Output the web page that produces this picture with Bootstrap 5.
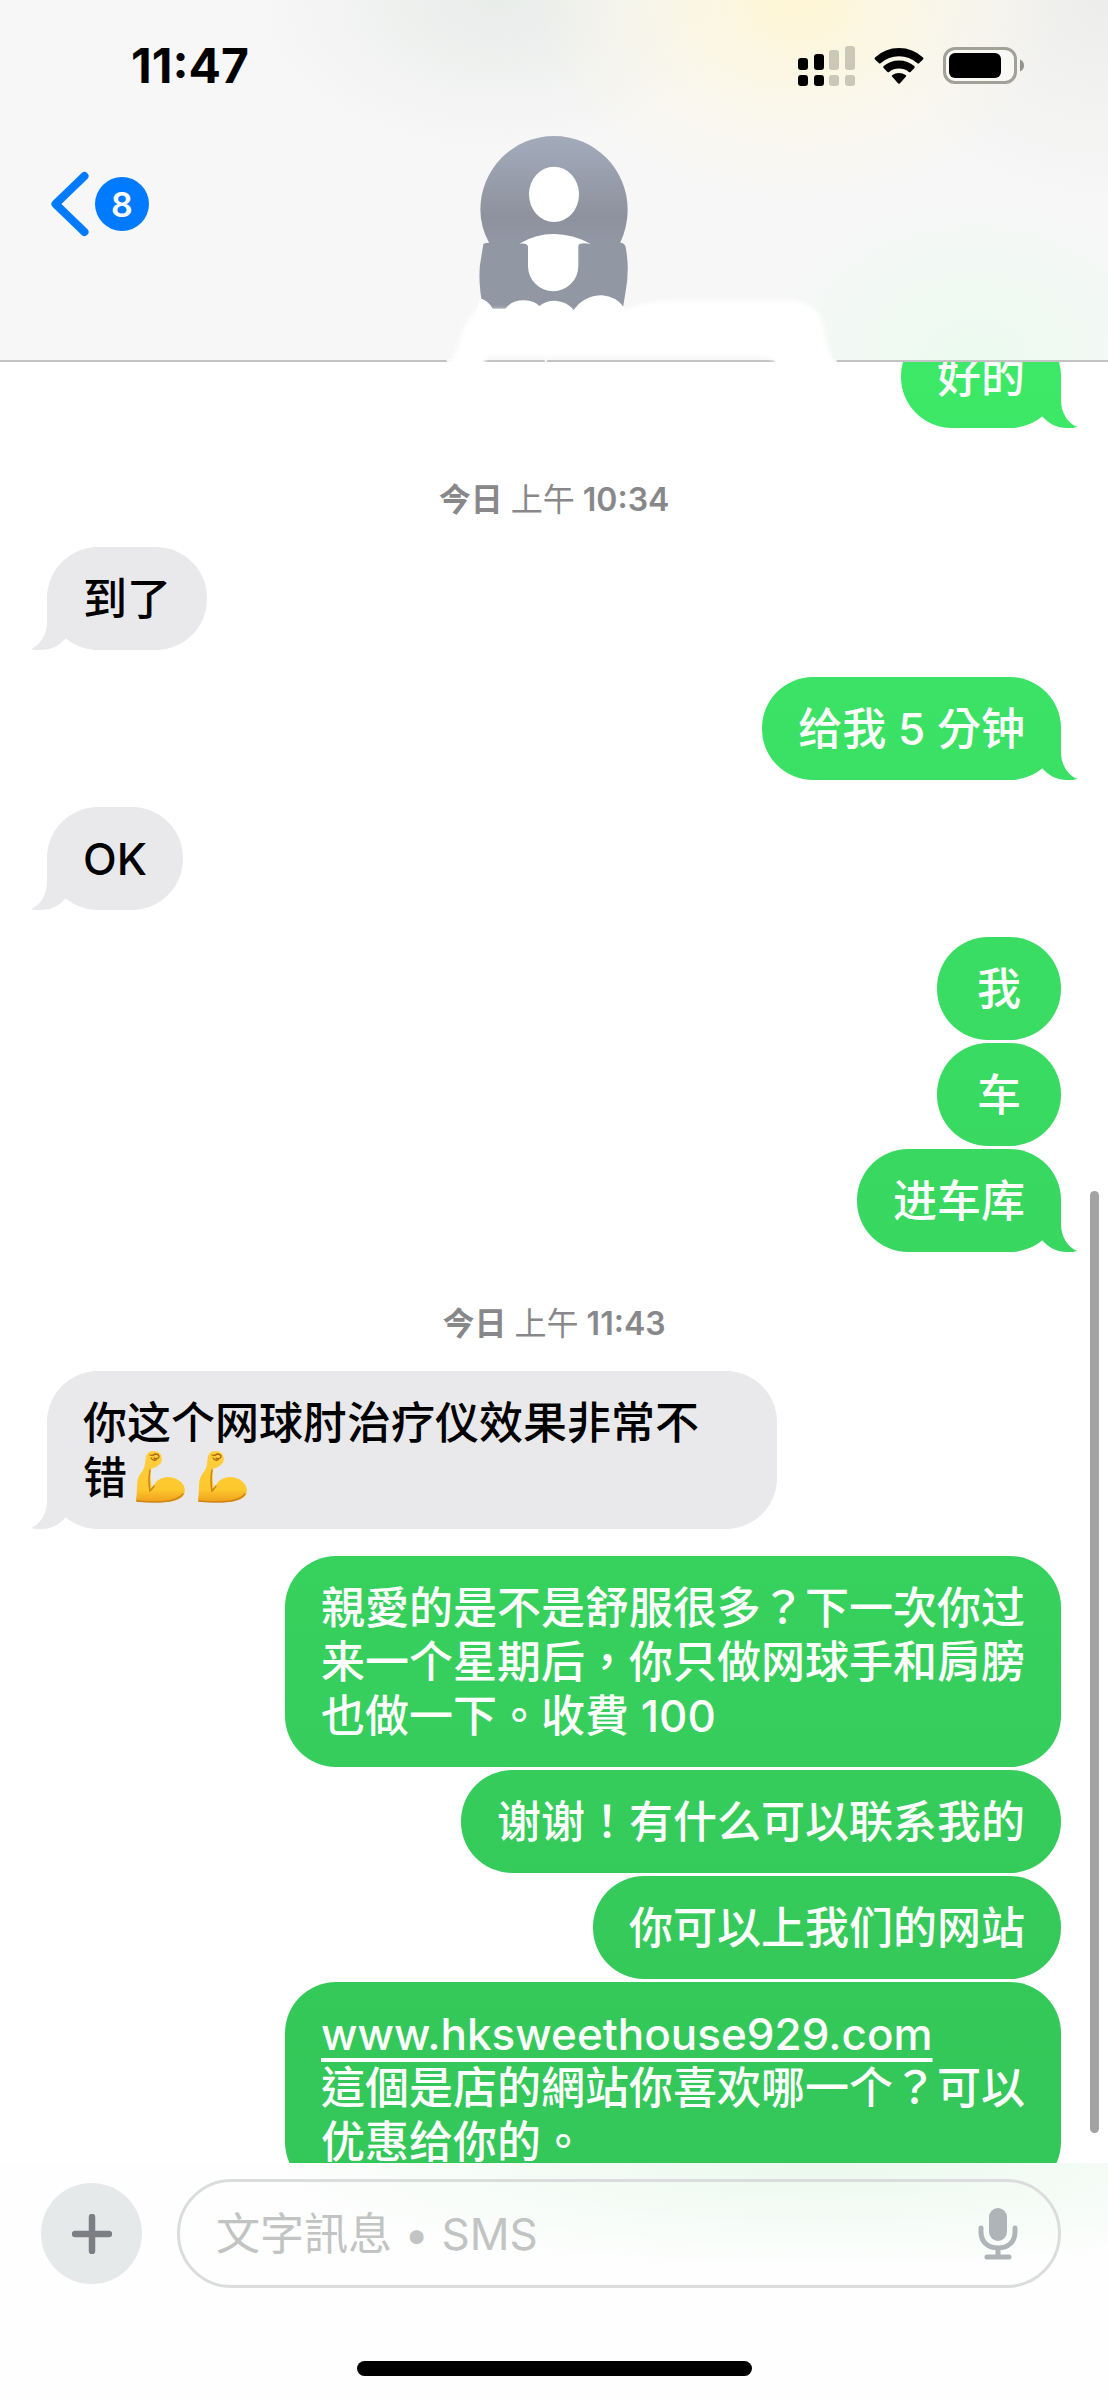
<!DOCTYPE html>
<html lang="zh-Hant">
<head>
<meta charset="utf-8">
<meta name="viewport" content="width=device-width, initial-scale=1">
<title>訊息</title>
<link href="https://cdn.jsdelivr.net/npm/bootstrap@5.3.0/dist/css/bootstrap.min.css" rel="stylesheet">
<style>
  body { font-family: Inter, "Noto Sans CJK TC", sans-serif; font-size: 44px; line-height: 54px; color: #000; background: #fff; }
  .topbar {
    z-index: 2; height: 362px; border-bottom: 2px solid #c3c3c4;
    background:
      radial-gradient(ellipse 260px 200px at 72% 0, rgba(255,246,212,1), rgba(253,248,226,.6) 50%, rgba(250,248,240,0)),
      radial-gradient(ellipse 240px 150px at 45% 0, rgba(231,235,232,.9), rgba(231,235,232,0)),
      radial-gradient(ellipse 240px 200px at 100% 0, rgba(236,236,234,.9), rgba(236,236,234,0)),
      radial-gradient(ellipse 220px 170px at 88% 100%, rgba(236,251,240,1), rgba(240,249,243,0)),
      #f7f7f7;
  }
  .status { padding: 39px 83px 0 131px; }
  .clock { font-size: 48px; font-weight: 700; }
  .status-icons { gap: 19px; }
  .back { padding: 0; margin: 78px 0 0 50px; gap: 6px; }
  .unread { width: 54px; height: 54px; font-size: 34px; font-weight: 600; background: #007aff; }
  .contact { top: 110px; left: 50%; margin-left: -134px; }
  .thread { padding: 0 47px; margin-top: -37px; }
  .bubble { position: relative; padding: 25px 36px 24px; border-radius: 51px; font-weight: 500; min-width: 124px; text-align: start; overflow-wrap: anywhere; }
  .sent { align-self: flex-end; max-width: 776px; color: #fff; }
  .sent, .sent.tail::after { background: linear-gradient(#3eec69 8%, #34c759 86%) fixed; }
  .received { align-self: flex-start; max-width: 72%; background: #e9e9eb; }
  .single { text-align: center; }
  .tail::after {
    content: ""; position: absolute; bottom: 0; right: -16px; width: 40px; height: 54px;
    clip-path: path("M0 0H24V26C24 39 31 49 40 53C38 54 34 54 30 54C20 54 12 50 5 42L0 34Z");
  }
  .received.tail::after { right: auto; left: -16px; background: #e9e9eb; transform: scaleX(-1); }
  .next { margin-top: 3px; }
  .turn { margin-top: 27px; }
  .stamp { height: 119px; padding-top: 25px; font-size: 32px; color: #88888b; font-weight: 600; }
  .stamp b { font-weight: 700; }
  .stamp i { font-style: normal; font-weight: 400; }
  .bubble a { color: #fff; font-weight: 500; text-decoration-thickness: 4px; text-underline-offset: 8px; }
  .emoji { width: 52px; height: 54px; margin: 0 2px 0 8px; vertical-align: -10px; }
  .scrollbar-thumb { right: 9px; top: 829px; bottom: 30px; width: 9px; border-radius: 5px; background: #a3a3a3; }
  .composer {
    z-index: 2; height: 237px;
    background: radial-gradient(ellipse 52% 110px at 74% 0, #ebf9ee, rgba(255,255,255,0)), #fefefe;
  }
  .compose-row { padding: 16px 47px 0 41px; gap: 35px; }
  .plus { width: 101px; height: 101px; padding: 0; background: #e6e9ea; flex: none; }
  .field { height: 109px; border: 3px solid #dbdddd; border-radius: 55px; padding: 0 40px 0 36px; }
  .field input { font-size: 44px; border: 0; background: transparent; padding: 0; box-shadow: none; outline: 0; min-width: 0; }
  .field input::placeholder { color: #c2c4c4; opacity: 1; }
  .home-bar { width: 395px; height: 15px; margin-bottom: 24px; border-radius: 8px; background: #000; }
</style>
<script src="https://cdn.jsdelivr.net/npm/bootstrap@5.3.0/dist/js/bootstrap.bundle.min.js"></script>
</head>
<body>
<div class="d-flex flex-column vh-100 overflow-hidden">

  <header class="topbar position-relative flex-shrink-0">
    <div class="status d-flex justify-content-between align-items-center">
      <span class="clock">11:47</span>
      <div class="status-icons d-flex align-items-center">
        <svg width="57" height="42" viewBox="0 0 57 42" aria-hidden="true">
          <g><rect x="0" y="13" width="10" height="12" rx="3"/><rect x="16" y="9" width="10" height="16" rx="3"/><rect x="0" y="30" width="10" height="11" rx="3"/><rect x="16" y="30" width="10" height="11" rx="3"/></g>
          <g fill="#c9c8b9"><rect x="31" y="5" width="10" height="20" rx="3"/><rect x="47" y="1" width="10" height="24" rx="3"/><rect x="31" y="30" width="10" height="11" rx="3"/><rect x="47" y="30" width="10" height="11" rx="3"/></g>
        </svg>
        <svg width="50" height="38" viewBox="0 0 50 38" aria-hidden="true">
          <path d="M1 12.500Q0 11.500 1 10.500Q11 1 25 1T49 10.500Q50 11.500 49 12.500L45 16.300Q44.300 17 43.400 16.200Q35.500 9.200 25 9.200T6.600 16.200Q5.700 17 5 16.300Z"/>
          <path d="M9.600 21Q8.700 20 9.700 19.100Q16 13.500 25 13.500T40.300 19.100Q41.300 20 40.400 21L36.500 24.900Q35.700 25.600 34.800 24.900Q30.500 21.600 25 21.600T15.200 24.900Q14.300 25.600 13.500 24.900Z"/>
          <path d="M18 29.600Q17.300 28.700 18.400 28Q21.300 26 25 26T31.600 28Q32.700 28.700 32 29.600L26 36.200Q25 37.200 24 36.200Z"/>
        </svg>
        <svg width="82" height="38" viewBox="0 0 82 38" aria-hidden="true">
          <rect x="1.500" y="1.500" width="71" height="34" rx="10.500" fill="#fff" fill-opacity=".4" stroke="#a1a197" stroke-width="3"/>
          <rect x="6" y="6" width="52" height="25" rx="6"/>
          <path d="M77 12.500C79.500 13.500 81 15.500 81 18.500S79.500 23.500 77 24.500Z" fill="#93938d"/>
        </svg>
      </div>
    </div>
    <button type="button" class="back btn border-0 d-flex align-items-center" aria-label="返回">
      <svg width="39" height="66" viewBox="0 0 39 66" aria-hidden="true"><path d="M34.500 5L5.500 33L34.500 61" fill="none" stroke="#007aff" stroke-width="8" stroke-linecap="round" stroke-linejoin="round"/></svg>
      <span class="unread rounded-circle text-white d-flex align-items-center justify-content-center">8</span>
    </button>
    <svg class="contact position-absolute" width="440" height="254" viewBox="0 0 1320 762" aria-hidden="true">
      <defs>
        <linearGradient id="disc" x1="0" y1="0" x2="0" y2="1"><stop offset="0" stop-color="#a3abbb"/><stop offset=".75" stop-color="#8e929e"/><stop offset="1" stop-color="#9297a5"/></linearGradient>
        <filter id="soft" x="-5%" y="-10%" width="110%" height="120%"><feGaussianBlur stdDeviation="7"/></filter>
      </defs>
      <path d="M208 400Q181 350 181 299A221 221 0 0 1 623 299Q623 350 600 400Z" fill="url(#disc)"/>
      <path d="M190 402Q196 398 208 398H600Q615 398 617 412Q630 480 616 550L608 600H190Q170 500 184 440Z" fill="#9297a4"/>
      <ellipse cx="402" cy="253" rx="75" ry="83" fill="#fff"/>
      <path d="M298 401Q345 372 402 372T512 402Q476 396 475 408V468A75 75 0 0 1 324 468V410Q322 398 298 401Z" fill="#fff"/>
      <path d="M85 775Q115 715 125 670Q150 610 178 598L600 606Q660 572 760 572H1120Q1190 580 1208 640Q1222 720 1248 775H1075Q1065 740 1030 740H200L185 775Z" fill="#fff" filter="url(#soft)"/>
      <path d="M180 565Q205 572 218 596H256Q275 571 312 571Q345 573 358 588Q378 572 405 572Q445 576 461 601Q490 557 546 556Q590 560 612 592V680H150Z" fill="#fff"/>
      <path d="M80 748H190V762H80ZM1064 748H1250V762H1064ZM374 748H381V762H374Z" fill="#fff" fill-opacity=".85"/>
    </svg>
  </header>

  <main class="position-relative flex-grow-1 overflow-hidden" style="min-height:0">
    <div class="thread d-flex flex-column">
      <div class="bubble sent tail">好的</div>
      <div class="stamp d-flex align-items-center justify-content-center"><span><b>今日</b> <i>上午</i> 10:34</span></div>
      <div class="bubble received tail">到了</div>
      <div class="bubble sent tail turn">给我 5 分钟</div>
      <div class="bubble received tail turn">OK</div>
      <div class="bubble sent single turn">我</div>
      <div class="bubble sent single next">车</div>
      <div class="bubble sent tail next">进车库</div>
      <div class="stamp d-flex align-items-center justify-content-center"><span><b>今日</b> <i>上午</i> 11:43</span></div>
      <div class="bubble received tail">你这个网球肘治疗仪效果非常不错<svg class="emoji" viewBox="0 0 52 54" role="img" aria-label="💪"><use href="#flex-arm"/></svg><svg class="emoji" viewBox="0 0 52 54" role="img" aria-label="💪"><use href="#flex-arm"/></svg></div>
      <div class="bubble sent turn">親愛的是不是舒服很多？下一次你过来一个星期后，你只做网球手和肩膀也做一下。收費 100</div>
      <div class="bubble sent next">谢谢！有什么可以联系我的</div>
      <div class="bubble sent next">你可以上我们的网站</div>
      <div class="bubble sent next"><a href="#">www.hksweethouse929.com</a><br>這個是店的網站你喜欢哪一个？可以优惠给你的。</div>
    </div>
    <div class="scrollbar-thumb position-absolute"></div>
  </main>

  <footer class="composer flex-shrink-0 d-flex flex-column justify-content-between">
    <form class="compose-row d-flex align-items-center">
      <button type="button" class="plus btn rounded-circle border-0 d-flex align-items-center justify-content-center" aria-label="加入">
        <svg width="40" height="40" viewBox="0 0 40 40" aria-hidden="true"><path d="M20 3V37M3 20H37" stroke="#7d7e83" stroke-width="6.500" stroke-linecap="round"/></svg>
      </button>
      <div class="field d-flex align-items-center flex-grow-1">
        <input class="flex-grow-1" type="text" aria-label="文字訊息" placeholder="文字訊息 • SMS">
        <button type="button" class="btn p-0 border-0 d-flex" aria-label="聽寫">
          <svg width="40" height="52" viewBox="0 0 40 52" aria-hidden="true"><rect x="11" y="0" width="18" height="33" rx="9" fill="#aeb4b8"/><path d="M3 20V24C3 34 10 40 20 40S37 34 37 24V20M20 40V48M9 49H31" fill="none" stroke="#aeb4b8" stroke-width="5" stroke-linecap="round"/></svg>
        </button>
      </div>
    </form>
    <div class="home-bar mx-auto"></div>
  </footer>
</div>

<svg width="0" height="0" class="position-absolute" aria-hidden="true">
  <defs>
    <linearGradient id="skin" x1="0" y1="0" x2="0" y2="1"><stop offset="0" stop-color="#ffcf3f"/><stop offset=".75" stop-color="#fdc82c"/><stop offset="1" stop-color="#ee9f1e"/></linearGradient>
    <g id="flex-arm">
      <path d="M11 6Q13 1 18 1Q24 1 26 5Q28 11 25 14Q21 18 16 19Q15 27 17 40Q20 28 32 27Q44 27 49 36Q52 45 44 49Q34 53 21 52Q10 52 3 52Q1 52 1 50Q2 44 2 36Q2 28 6 23Q10 18 10 13Z" fill="url(#skin)"/>
      <path d="M15 20Q13 30 15 41Q17 39 19 36M2 51Q20 53 34 51Q44 49 48 44" fill="none" stroke="#cf8413" stroke-width="1.500" stroke-linecap="round"/>
      <path d="M15 5Q18 6 20 4Q24 4 24 7Q22 10 19 8M16 8Q18 11 21 10" fill="none" stroke="#a8680f" stroke-width="1.300" stroke-linecap="round"/>
    </g>
  </defs>
</svg>
</body>
</html>
